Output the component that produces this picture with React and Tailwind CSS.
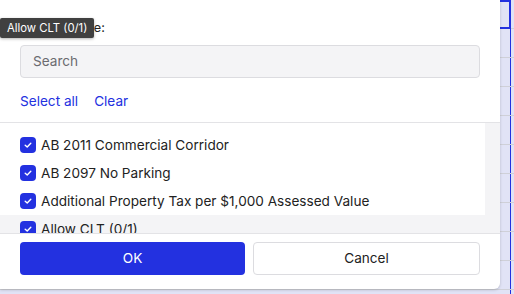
import React from "react";

const options = [
  { label: "AB 2011 Commercial Corridor" },
  { label: "AB 2097 No Parking" },
  { label: "Additional Property Tax per $1,000 Assessed Value" },
  { label: "Allow CLT (0/1)", hover: true },
];

const CheckIcon = () => (
  <svg width="10" height="10" viewBox="0 0 10 10" fill="none">
    <path d="M2.2 5.2 L4.2 7 L7.8 3.2" stroke="white" strokeWidth="1.4" strokeLinecap="round" strokeLinejoin="round" />
  </svg>
);

const App = () => {
  const rows = Array.from({ length: 11 });

  return (
    <div
      className="relative w-[514px] h-[294px] overflow-hidden bg-[#e1e3f6]"
      style={{ fontFamily: "Inter, 'Noto Sans', sans-serif" }}
    >
      {/* grid behind the popover */}
      <div className="flex flex-col">
        {rows.map((_, i) => (
          <div key={i} className="flex h-[29px] border-b border-[#cfd0d8]">
            <div
              className={`w-[511px] shrink-0 ${
                i === 0
                  ? "border-t-2 border-r-2 border-b-2 border-[#2331e0] -mb-px"
                  : "border-r border-[#2331e0]"
              }`}
            />
          </div>
        ))}
      </div>

      {/* filter popover */}
      <div className="absolute left-0 top-0 w-[500px] h-[289px] flex flex-col bg-white rounded-br-md shadow-[0_1px_3px_rgba(0,0,0,0.18)]">
        <div className="px-5 pt-5 text-[12.7px] leading-4 text-[#222]">Filter by state:</div>

        <div className="px-5 mt-[9px]">
          <div className="h-[33px] flex items-center px-[12px] rounded-[4px] border border-[#dcdce0] bg-[#f4f4f6] text-[13.6px] text-[#6b6b70]">
            Search
          </div>
        </div>

        <div className="px-5 mt-[13px] mb-[11px] flex gap-4 text-[13.6px] leading-5 text-[#2331e0]">
          <span>Select all</span>
          <span>Clear</span>
        </div>

        <div className="flex h-[111px] border-t border-[#e3e3e6] overflow-hidden">
          <div className="flex-1 pt-2">
            {options.map((o) => (
              <div
                key={o.label}
                className={`h-[28px] flex items-center gap-[5px] px-5 text-[13.6px] text-[#222] ${
                  o.hover ? "bg-[#f4f4f6]" : ""
                }`}
              >
                <span className="w-4 h-4 rounded-[4px] bg-[#2331e0] flex items-center justify-center shrink-0">
                  <CheckIcon />
                </span>
                <span className="whitespace-nowrap">{o.label}</span>
              </div>
            ))}
          </div>
          <div className="w-[15px] bg-[#f4f4f6]" />
        </div>

        <div className="flex gap-2 px-5 pt-2 border-t border-[#e3e3e6]">
          <button className="flex-1 h-[33px] rounded-[4px] bg-[#2331e0] text-white text-[13.6px]">OK</button>
          <button className="flex-1 h-[33px] rounded-[4px] border border-[#dcdce0] bg-white text-[#222] text-[13.6px]">
            Cancel
          </button>
        </div>
      </div>

      {/* tooltip */}
      <div className="absolute left-0 top-[18px] h-[20px] flex items-center px-[7px] bg-[#404040] text-white text-[11.3px] rounded-[2px] shadow-[0_1px_3px_rgba(0,0,0,0.3)]">
        Allow CLT (0/1)
      </div>
    </div>
  );
};

export default App;
